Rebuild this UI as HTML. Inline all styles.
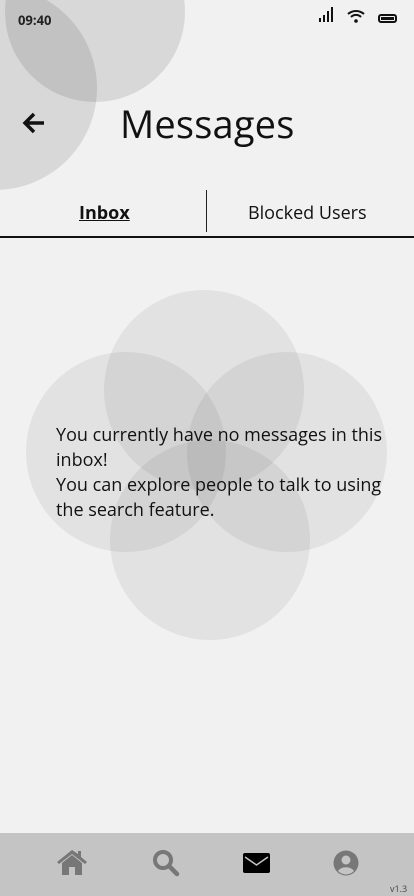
<!DOCTYPE html>
<html><head><meta charset="utf-8"><style>
body{margin:0;width:414px;height:896px;background:#f1f1f1;position:relative;overflow:hidden;font-family:"Open Sans","Liberation Sans",sans-serif;}
.c{position:absolute;border-radius:50%;}
.t{position:absolute;}
</style></head><body>
<div class="c" style="left:5px;top:-78px;width:180px;height:180px;background:rgba(0,0,0,0.1)"></div>
<div class="c" style="left:-107px;top:-14px;width:204px;height:204px;background:rgba(0,0,0,0.1)"></div>
<div class="t" style="left:18px;top:11px;font-size:13px;font-weight:bold;color:#222">09:40</div>
<svg class="t" style="left:318px;top:6px" width="82" height="20" viewBox="0 0 82 20">
<rect x="1" y="12" width="2" height="4" fill="#111"/><rect x="5" y="9" width="2" height="7" fill="#111"/><rect x="9" y="5" width="2" height="11" fill="#111"/><rect x="13" y="1" width="2" height="15" fill="#111"/>
<path d="M30 8a12 12 0 0 1 16 0M33 11a7 7 0 0 1 10 0" stroke="#111" stroke-width="2" fill="none"/><circle cx="38" cy="15" r="1.8" fill="#111"/>
<rect x="61" y="9" width="17" height="7" rx="2" fill="none" stroke="#111" stroke-width="2"/><rect x="63" y="11" width="13" height="3" fill="#111"/>
</svg>
<svg class="t" style="left:22px;top:112px" width="24" height="22" viewBox="0 0 24 22"><path d="M22 11H4M12 2L3 11l9 9" stroke="#111" stroke-width="3.5" fill="none"/></svg>
<div class="t" style="left:120px;top:98px;font-size:38px;letter-spacing:0.2px;color:#111">Messages</div>
<div class="t" style="left:79px;top:201px;font-size:18px;font-weight:bold;text-decoration:underline;color:#111">Inbox</div>
<div class="t" style="left:206px;top:190px;width:1px;height:42px;background:#222"></div>
<div class="t" style="left:248px;top:201px;font-size:18px;color:#111">Blocked Users</div>
<div class="t" style="left:0;top:236px;width:414px;height:2px;background:#111"></div>
<div class="c" style="left:104px;top:290px;width:200px;height:200px;background:rgba(0,0,0,0.06)"></div>
<div class="c" style="left:26px;top:352px;width:200px;height:200px;background:rgba(0,0,0,0.06)"></div>
<div class="c" style="left:187px;top:352px;width:200px;height:200px;background:rgba(0,0,0,0.06)"></div>
<div class="c" style="left:110px;top:440px;width:200px;height:200px;background:rgba(0,0,0,0.06)"></div>
<div class="t" style="left:56px;top:423px;width:336px;font-size:18px;line-height:25px;color:#111">You currently have no messages in this inbox!<br>You can explore people to talk to using the search feature.</div>
<div class="t" style="left:0;top:833px;width:414px;height:63px;background:#c4c4c4"></div>
<svg class="t" style="left:56px;top:848px" width="32" height="28" viewBox="0 0 32 28"><path d="M16 2L1 14l2 2L16 6l13 10 2-2-6-5V3h-3v3z" fill="#777"/><path d="M6 15l10-8 10 8v12h-7v-8h-6v8H6z" fill="#777"/></svg>
<svg class="t" style="left:152px;top:849px" width="28" height="28" viewBox="0 0 28 28"><circle cx="11" cy="11" r="8" stroke="#777" stroke-width="4" fill="none"/><path d="M17 17l8 8" stroke="#777" stroke-width="4.5" stroke-linecap="round"/></svg>
<svg class="t" style="left:243px;top:853px" width="27" height="20" viewBox="0 0 27 20"><rect x="0" y="0" width="27" height="20" rx="2" fill="#000"/><path d="M2 4l11.5 8L25 4" stroke="#c4c4c4" stroke-width="1.5" fill="none"/></svg>
<svg class="t" style="left:333px;top:850px" width="26" height="26" viewBox="0 0 26 26"><circle cx="13" cy="13" r="12.5" fill="#777"/><circle cx="13" cy="10" r="4.5" fill="#c4c4c4"/><path d="M5 21a9 7 0 0 1 16 0a11 11 0 0 1-16 0z" fill="#c4c4c4"/></svg>
<div class="t" style="left:390px;top:882px;font-size:9px;color:#444">v1.3</div>
</body></html>
